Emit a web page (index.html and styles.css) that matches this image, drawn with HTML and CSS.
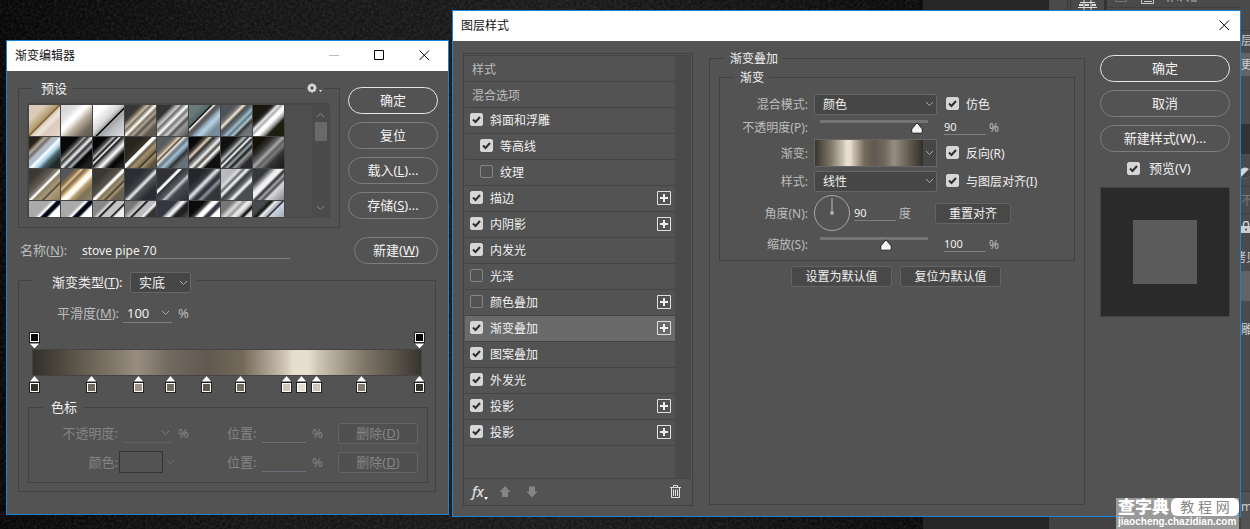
FILE: index.html
```html
<!DOCTYPE html>
<html lang="zh-CN">
<head>
<meta charset="utf-8">
<title>图层样式</title>
<link rel="stylesheet" href="styles.css">
</head>
<body>
<svg width="0" height="0" class="defs" aria-hidden="true">
  <symbol id="stop-up" viewBox="0 0 11 17"><path d="M5.500 0 11 6V17H0V6z" fill="#222"/><path d="M5.500 0 10.300 5.500H.7z" fill="#fff"/><path d="M1 7h9v9H1z" fill="#fff"/><path d="M2 8h7v7H2z" fill="currentColor"/></symbol>
  <symbol id="stop-down" viewBox="0 0 11 17"><path d="M0 0h11v11L5.500 17 0 11z" fill="#222"/><path d="M1 1h9v9H1z" fill="#fff"/><path d="M2 2h7v7H2z" fill="currentColor"/><path d="M.7 11.500h9.600L5.500 16.500z" fill="#fff"/></symbol>
  <symbol id="plus" viewBox="0 0 14 14"><path d="M.5 .5h13v13H.5z" fill="none" stroke="#e0e0e0"/><path d="M7 3v8M3 7h8" stroke="#f0f0f0" stroke-width="2"/></symbol>
  <symbol id="close" viewBox="0 0 11 11"><path d="M.5 .5l9.500 9.500M10 .5l-9.500 9.500" stroke="#000" stroke-width="1"/></symbol>
</svg>

<div class="backdrop" aria-hidden="true">
  <svg class="grain"><filter id="g"><feTurbulence type="fractalNoise" baseFrequency=".35" numOctaves="3"/><feColorMatrix values="0 0 0 0 1  0 0 0 0 1  0 0 0 0 1  .5 0 0 0 -.15"/></filter><rect width="100%" height="100%" filter="url(#g)"/></svg>
  <div class="strip"></div>
  <div class="panels">
    <svg class="panel-icons" viewBox="0 0 201 10"><path d="M18.500 0v10M21.500 0v10" stroke="#3a3a3a"/><path d="M56.500 0v10" stroke="#333" stroke-width="3"/><path d="M29 7.500h19M31 2.500h15" stroke="#ddd" stroke-width="1"/><path d="M30 4h4v2h-4zM36 4h4v2h-4zM43 4h4v2h-4z" fill="#ddd"/><path d="M35 0v10M42 0v10" stroke="#ddd"/><path d="M92.500 0v3.500h12V0M95 1.500h8" fill="none" stroke="#ccc"/><path d="M66.500 0v1.500h11V0" fill="none" stroke="#777"/><path d="M119 0v2M123 0v2M128 0h4v2M137 0h2v2M142 1h6" stroke="#bbb"/><path d="M58 7.500h143" stroke="#3f3f3f"/></svg>
    <div class="edge">
      <span class="e1">层</span><span class="e2">更</span>
      <svg class="e3" viewBox="0 0 12 12"><circle cx="6" cy="6" r="5.500" fill="#d5d5d5"/><path d="M2 10A5.500 5.500 0 0 0 10 2z" fill="#444"/></svg>
      <span class="e4">不</span>
      <svg class="e5" viewBox="0 0 10 12"><path d="M2.500 5V3a2.500 2.500 0 0 1 5 0v2" fill="none" stroke="#ccc" stroke-width="1.500"/><path d="M0 5h10v7H0z" fill="#ccc"/><circle cx="5" cy="8.500" r="1" fill="#444"/></svg>
      <span class="e6">拷贝</span><span class="e7">雕</span><span class="e8">m</span>
    </div>
  </div>
</div>

<main class="desktop">
  <section class="window editor" aria-label="渐变编辑器">
    <header class="titlebar"><h1>渐变编辑器</h1>
      <div class="win-buttons">
        <button aria-label="最小化"><svg width="11" height="11"><path d="M0 5.500h10" stroke="#bbb"/></svg></button>
        <button aria-label="最大化"><svg width="11" height="11"><path d="M.5 .5h9v9h-9z" fill="none" stroke="#000"/></svg></button>
        <button aria-label="关闭"><svg width="11" height="11"><use href="#close"/></svg></button>
      </div>
    </header>
    <div class="editor-body">
      <div class="editor-top">
        <fieldset class="presets">
          <legend>预设</legend>
          <button class="gear" aria-label="预设选项"><svg width="16" height="12" viewBox="0 0 16 12"><g stroke="#dedede" stroke-width="2.400"><path d="M5 .5v9M.5 5h9M1.800 1.800l6.400 6.400M8.200 1.800l-6.400 6.400"/></g><circle cx="5" cy="5" r="3.300" fill="#dedede"/><circle cx="5" cy="5" r="1.700" fill="#535353"/><path d="M12 7h3l-1.500 2z" fill="#eee"/></svg></button>
          <div class="preset-box">
            <div class="swatches">
              <i></i><i></i><i></i><i></i><i></i><i></i><i></i><i></i>
              <i></i><i></i><i></i><i></i><i></i><i></i><i></i><i></i>
              <i></i><i></i><i></i><i></i><i></i><i></i><i></i><i></i>
              <i></i><i></i><i></i><i></i><i></i><i></i><i></i><i></i>
            </div>
            <div class="scroller"><svg width="9" height="6"><path d="M1 5l3.500-3.500L8 5" fill="none" stroke="#8a8a8a"/></svg><span class="thumb"></span><svg width="9" height="6"><path d="M1 1l3.500 3.500L8 1" fill="none" stroke="#8a8a8a"/></svg></div>
          </div>
        </fieldset>
        <div class="actions">
          <button class="pill primary">确定</button>
          <button class="pill">复位</button>
          <button class="pill">载入(<u>L</u>)...</button>
          <button class="pill">存储(<u>S</u>)...</button>
        </div>
      </div>
      <div class="name-row">
        <label class="dim" for="name">名称(<u>N</u>):</label>
        <input class="line" id="name" type="text" value="stove pipe 70">
        <button class="pill">新建(<u>W</u>)</button>
      </div>
      <fieldset class="gradient-set">
        <legend><label for="kind">渐变类型(<u>T</u>):</label><select id="kind" class="drop"><option>实底</option></select></legend>
        <div class="smooth"><label class="dim" for="smooth">平滑度(<u>M</u>):</label><input class="line combo" id="smooth" type="text" value="100"><span class="dim">%</span></div>
        <div class="stops top">
          <svg class="stop k" style="left:0%"><use href="#stop-down"/></svg><svg class="stop k" style="left:100%"><use href="#stop-down"/></svg>
        </div>
        <div class="ramp"></div>
        <div class="stops">
          <svg class="stop c1" style="left:0%"><use href="#stop-up"/></svg>
          <svg class="stop c2" style="left:14.8%"><use href="#stop-up"/></svg>
          <svg class="stop c3" style="left:27%"><use href="#stop-up"/></svg>
          <svg class="stop c2" style="left:35.3%"><use href="#stop-up"/></svg>
          <svg class="stop c4" style="left:44.7%"><use href="#stop-up"/></svg>
          <svg class="stop c2" style="left:53.5%"><use href="#stop-up"/></svg>
          <svg class="stop c5" style="left:65.5%"><use href="#stop-up"/></svg>
          <svg class="stop c6" style="left:69.4%"><use href="#stop-up"/></svg>
          <svg class="stop c5" style="left:73.3%"><use href="#stop-up"/></svg>
          <svg class="stop c7" style="left:84.9%"><use href="#stop-up"/></svg>
          <svg class="stop c1" style="left:100%"><use href="#stop-up"/></svg>
        </div>
        <fieldset class="stop-set">
          <legend>色标</legend>
          <div class="stop-grid">
            <label class="end" for="so">不透明度:</label><input class="line combo" id="so" type="text" disabled><span>%</span>
            <label for="p1">位置:</label><input class="line" id="p1" type="text" disabled><span class="pct">%</span>
            <button class="box" disabled>删除(<u>D</u>)</button>
            <span class="end">颜色:</span><span class="color-cell"><button class="color" aria-label="颜色" disabled></button><svg width="9" height="6"><path d="M1 1l3.500 3.500L8 1" fill="none" stroke="#6c6c6c"/></svg></span><span></span>
            <label for="p2">位置:</label><input class="line" id="p2" type="text" disabled><span class="pct">%</span>
            <button class="box" disabled>删除(<u>D</u>)</button>
          </div>
        </fieldset>
      </fieldset>
    </div>
  </section>

  <section class="window style" aria-label="图层样式">
    <header class="titlebar"><h1>图层样式</h1>
      <div class="win-buttons"><button aria-label="关闭"><svg width="11" height="11"><use href="#close"/></svg></button></div>
    </header>
    <div class="style-body">
      <nav class="effects">
        <ul>
          <li class="head">样式</li>
          <li class="head">混合选项</li>
          <li><label><input type="checkbox" checked>斜面和浮雕</label></li>
          <li class="sub"><label><input type="checkbox" checked>等高线</label></li>
          <li class="sub"><label><input type="checkbox">纹理</label></li>
          <li><label><input type="checkbox" checked>描边</label><button aria-label="添加"><svg width="14" height="14"><use href="#plus"/></svg></button></li>
          <li><label><input type="checkbox" checked>内阴影</label><button aria-label="添加"><svg width="14" height="14"><use href="#plus"/></svg></button></li>
          <li><label><input type="checkbox" checked>内发光</label></li>
          <li><label><input type="checkbox">光泽</label></li>
          <li><label><input type="checkbox">颜色叠加</label><button aria-label="添加"><svg width="14" height="14"><use href="#plus"/></svg></button></li>
          <li class="on"><label><input type="checkbox" checked>渐变叠加</label><button aria-label="添加"><svg width="14" height="14"><use href="#plus"/></svg></button></li>
          <li><label><input type="checkbox" checked>图案叠加</label></li>
          <li><label><input type="checkbox" checked>外发光</label></li>
          <li><label><input type="checkbox" checked>投影</label><button aria-label="添加"><svg width="14" height="14"><use href="#plus"/></svg></button></li>
          <li><label><input type="checkbox" checked>投影</label><button aria-label="添加"><svg width="14" height="14"><use href="#plus"/></svg></button></li>
        </ul>
        <div class="tools">
          <button class="fx"><em>fx</em><svg width="4" height="3"><path d="M0 0h4L2 3z" fill="#fff"/></svg></button>
          <button aria-label="上移"><svg width="12" height="12"><path d="M6 0l5.500 6H9v5H3V6H.5z" fill="#858585"/></svg></button>
          <button aria-label="下移"><svg width="12" height="12"><path d="M6 11.500L.5 5.500H3V.5h6v5h2.500z" fill="#858585"/></svg></button>
          <button class="bin" aria-label="删除"><svg width="11" height="13" fill="none" stroke="#e0e0e0"><path d="M0 2.500h11M3.500 2V.5h4V2M1.500 3v9.500h8V3M3.500 4.500v6.500M5.500 4.500v6.500M7.500 4.500v6.500"/></svg></button>
        </div>
      </nav>

      <fieldset class="overlay">
        <legend>渐变叠加</legend>
        <fieldset class="options">
          <legend>渐变</legend>
          <div class="row"><label class="cap" for="mode">混合模式:</label><select id="mode" class="drop wide"><option>颜色</option></select><label class="tick"><input type="checkbox" checked>仿色</label></div>
          <div class="row r24"><label class="cap" for="op">不透明度(P):</label><input id="op" type="range" value="90"><input class="line val" type="text" value="90" aria-label="不透明度"><span class="dim">%</span></div>
          <div class="row r28"><span class="cap">渐变:</span><button class="ramp-drop" aria-label="渐变"><span class="ramp-face"></span></button><label class="tick"><input type="checkbox" checked>反向(R)</label></div>
          <div class="row mt"><label class="cap" for="sty">样式:</label><select id="sty" class="drop wide"><option>线性</option></select><label class="tick"><input type="checkbox" checked>与图层对齐(I)</label></div>
          <div class="row mt"><label class="cap" for="ang">角度(N):</label><svg class="dial" width="36" height="36" viewBox="0 0 36 36"><circle cx="18" cy="18" r="17.500" fill="none" stroke="#a8a8a8"/><path d="M18 3v15" stroke="#999" stroke-width="1.500"/><circle cx="18" cy="18" r="2" fill="#aaa"/></svg><input class="line val" id="ang" type="text" value="90"><span class="dim">度</span><button class="box reset">重置对齐</button></div>
          <div class="row r26"><label class="cap" for="sc">缩放(S):</label><input id="sc" type="range" value="61"><input class="line val" type="text" value="100" aria-label="缩放"><span class="dim">%</span></div>
        </fieldset>
        <div class="defaults"><button class="box">设置为默认值</button><button class="box">复位为默认值</button></div>
      </fieldset>

      <aside class="side">
        <button class="pill primary">确定</button>
        <button class="pill">取消</button>
        <button class="pill">新建样式(W)...</button>
        <label class="tick"><input type="checkbox" checked>预览(V)</label>
        <div class="preview"><div></div></div>
      </aside>
    </div>
  </section>
</main>

<div class="mark"><div class="mark-top"><b>查字典</b><span>教 程 网</span></div><div class="mark-url">jiaocheng.chazidian.com</div></div>
</body>
</html>
```

FILE: styles.css
```css
* { box-sizing: border-box; }
body {
  margin: 0; min-height: 100vh; position: relative; overflow: hidden;
  background: #0c0c0c; color: #f0f0f0;
  font: 13px/17px "Noto Sans", "Noto Sans CJK SC", sans-serif;
}
button, input, select { font: inherit; color: inherit; margin: 0; padding: 0; border: 0; background: none; }
fieldset { margin: 0; padding: 0; min-width: 0; border: 1px solid #424242; }
legend { padding: 0; }
svg { display: block; flex: none; }
u { text-underline-offset: 1px; }
.defs { position: absolute; }
.dim { color: #bdbdbd; }

/* desktop behind the dialogs */
.backdrop { position: absolute; inset: 0; overflow: hidden; background: linear-gradient(90deg, #060606, #141414 20%, #1a1a1a 45%, #0a0a0a 72%); }
.grain { position: absolute; inset: 0; width: 100%; height: 100%; opacity: .3; }
.strip { position: absolute; top: 0; bottom: 0; right: 201px; width: 126px; background: #262626; }
.panels { position: absolute; top: 0; bottom: 0; right: 0; width: 201px; background: linear-gradient(#4a4a4a 90%, #424242); }
.panel-icons { width: 201px; height: 10px; }
.edge { position: absolute; top: 0; right: 0; bottom: 0; width: 9px; overflow: hidden; font-size: 12px; color: #ccc;
  background: linear-gradient(#4b4b4b 30px, #3f3f3f 30px 31px, #4b4b4b 31px 53px, #646464 53px 76px, #4b4b4b 76px 124px, #333 124px 154px, #4b4b4b 154px 186px, #404040 186px 187px, #4b4b4b 187px 213px, #404040 213px 214px, #4b4b4b 214px 271px, #646464 271px 301px, #4b4b4b 301px 491px, #3c3c3c 491px 492px, #535353 492px); }
.edge > * { position: absolute; left: 0; white-space: nowrap; }
.e1 { top: 32px; } .e2 { top: 56px; }
.edge .e3 { top: 167px; left: -2px; width: 12px; height: 12px; }
.e4 { top: 192px; color: #777; }
.edge .e5 { top: 221px; width: 10px; height: 12px; }
.edge .e6 { top: 249px; left: -7px; } .edge .e7 { top: 321px; left: 0; } .e8 { top: 498px; }

/* windows */
.desktop { position: relative; display: grid; grid-template-columns: 443fr 789fr; gap: 3px; align-items: start; padding: 10px 9px 12px 6px; }
.window { border: 1px solid #1883d7; background: #535353; min-width: 0; }
.editor { margin-top: 30px; }
.titlebar { height: 30px; padding: 0 18px 2px 8px; display: flex; align-items: center; justify-content: space-between; background: #fff; color: #111; }
.titlebar h1 { margin: 0; font-size: 12px; font-weight: 400; }
.win-buttons { display: flex; gap: 34px; }
.style .titlebar { padding-right: 10px; }

.pill { height: 27px; border: 1px solid #7d7d7d; border-radius: 14px; color: #f2f2f2; white-space: nowrap; }
.pill.primary { border: 1px solid #e6e6e6; }
.box { height: 21px; border: 1px solid #636363; border-radius: 3px; background: #484848; white-space: nowrap; }
.line { height: 17px; min-width: 0; border-bottom: 1px solid #7f7f7f; }
.drop { appearance: none; height: 21px; border: 1px solid #666; border-radius: 2px; background: #464646 url("data:image/svg+xml,%3Csvg xmlns='http://www.w3.org/2000/svg' width='9' height='6'%3E%3Cpath d='M1 1l3.5 3.5L8 1' fill='none' stroke='%23aaa'/%3E%3C/svg%3E") no-repeat right 2px center; }
.combo { background: url("data:image/svg+xml,%3Csvg xmlns='http://www.w3.org/2000/svg' width='9' height='6'%3E%3Cpath d='M1 1l3.5 3.5L8 1' fill='none' stroke='%23aaa'/%3E%3C/svg%3E") no-repeat right 2px center; }

input[type=checkbox] { appearance: none; flex: none; width: 13px; height: 13px; border: 1px solid #858585; border-radius: 2px; }
input[type=checkbox]:checked { border-color: #d6d6d6; background: #d6d6d6 url("data:image/svg+xml,%3Csvg xmlns='http://www.w3.org/2000/svg' width='11' height='11'%3E%3Cpath d='M2 5.500L4.500 8L9 3' fill='none' stroke='%232e2e2e' stroke-width='2'/%3E%3C/svg%3E") center no-repeat; }

/* gradient editor */
.editor-body { padding: 9px 10px 22px 11px; }
.editor-top { display: grid; grid-template-columns: 1fr 90px; gap: 8px; }
.presets { position: relative; padding: 6px 9px 9px 8px; }
.presets legend { margin-left: 6px; padding: 0 6px 0 8px; }
.gear { position: absolute; top: -14px; right: 15px; width: 19px; padding-left: 2px; background: #535353; }
.preset-box { display: flex; justify-content: space-between; height: 115px; border: solid #484848; border-width: 2px 1px 1px 2px; background: #4f4f4f; }
.swatches { height: 112px; overflow: hidden; display: grid; grid-template-columns: repeat(8, 31px); grid-auto-rows: 31px; gap: 1px; outline: 1px solid #454545; background: #454545; }
.scroller { width: 17px; padding: 7px 0 6px; display: flex; flex-direction: column; align-items: center; background: #4b4b4b; }
.scroller .thumb { width: 12px; height: 19px; margin: 4px 0 auto; background: #696969; }
.actions { padding-top: 7px; display: flex; flex-direction: column; gap: 8px; }

.swatches i:nth-child(1) { background: linear-gradient(135deg, #dccbba 25%, #c2ae88 38%, #b39a6a 46%, #76603a 50%, #dfcdb8 53%, #f0e5da 62%, #dccabd 72%, #e6d8c8); }
.swatches i:nth-child(2) { background: linear-gradient(135deg, #d8d8d8 15%, #e4e4e4 28%, #fff 38% 44%, #b9ac9b 60%, #756c60 80%, #5b554c); }
.swatches i:nth-child(3) { background: linear-gradient(135deg, #fff 20%, #d8d8d8 44%, #a8a8a8 53%, #000 54% 56%, #a0a0a0 58%, #b8bcc0 70%, #dadde0); }
.swatches i:nth-child(4) { background: linear-gradient(135deg, #373737 25%, #6a6251 30%, #c5baa7 37%, #756d5f 42%, #fffef7 50%, #796f61 56%, #b0a695 61%, #534e48 67%, #a09482 73%, #5f5750 82%); }
.swatches i:nth-child(5) { background: linear-gradient(135deg, #343434 24%, #888 30%, #ccc 36%, #686868 41%, #fff 50%, #777 56%, #d2d2d2 64%, #505050 70%, #979797 77%, #4c4c4c); }
.swatches i:nth-child(6) { background: linear-gradient(135deg, #6c7979 20%, #526464 34%, #020b06 37%, #f5f5ed 40%, #5a5355 45%, #606068 51%, #93a9b9 58%, #b9d3e4 65%, #778b99 80%); }
.swatches i:nth-child(7) { background: linear-gradient(135deg, #4d5358 22%, #777577 31%, #f5e7d3 37%, #4c4b4d 43%, #617480 51%, #a4bac4 57%, #5d7786 63%, #b0cad3 68%, #343332 74%, #6d7478 82%); }
.swatches i:nth-child(8) { background: linear-gradient(135deg, #19170e 28%, #343434 34%, #eee 41%, #aaa 46%, #fff 52% 57%, #999 66%, #1c1f10 73%); }
.swatches i:nth-child(9) { background: linear-gradient(135deg, #282219 18%, #b9ab97 27%, #6c6b6b 33%, #bbb 40%, #a9c1d8 48%, #fff 52%, #aed6e9 62%, #486069 71%, #222a2b 84%); }
.swatches i:nth-child(10) { background: linear-gradient(135deg, #080808 27%, #505050 35%, #aaa 39%, #333 43%, #f6f6f6 51%, #2a2c30 57%, #aeb2b8 64%, #020202 70%, #222 88%); }
.swatches i:nth-child(11) { background: linear-gradient(135deg, #070707 22%, #575757 30%, #bbb 34%, #111 39%, #fff 43%, #16161a 47%, #999 54%, #fff 61%, #222 72%, #030303 78%, #333); }
.swatches i:nth-child(12) { background: linear-gradient(135deg, #28251e 28%, #3b3528 42%, #fff 45% 50%, #695d46 54%, #a19271 62%, #7a6b50 70%, #30291f 73%, #a08d69 76%, #5a5040 88%); }
.swatches i:nth-child(13) { background: linear-gradient(135deg, #575c61 24%, #8b8274 32%, #ead6b7 36%, #4d4a4a 41%, #f4eada 44%, #607581 51%, #a8bfd0 59%, #647d8d 65%, #2e302f 70%, #687078 80%); }
.swatches i:nth-child(14) { background: linear-gradient(135deg, #0a0a0a 20%, #4f483f 28%, #ded2be 34%, #292723 40%, #92949a 48%, #f3f3f3 53%, #4d473f 60%, #fff 66%, #101010 75%); }
.swatches i:nth-child(15) { background: linear-gradient(135deg, #111 25%, #444 32%, #bcc3c5 39%, #2b3032 44%, #fff 48%, #27292b 53%, #9ca8ad 59%, #16181a 65%, #999 71%, #282a2d 82%); }
.swatches i:nth-child(16) { background: linear-gradient(135deg, #151208 20%, #2f2e2c 32%, #666 43%, #aaa 49%, #5d5d5d 56%, #7b7b7b 61%, #333 72%, #181818); }
.swatches i:nth-child(17) { background: linear-gradient(135deg, #3b3732 20%, #625c54 40%, #8d877e 48%, #fff 51% 53%, #897d67 57%, #a79976 68%, #4e4537 73%, #ae9f7c 76%, #8b7956); }
.swatches i:nth-child(18) { background: linear-gradient(135deg, #54565c 20%, #92784f 29%, #dfc38b 34%, #7d654c 39%, #c3a577 45%, #fff3d7 50%, #fff 58%, #b69c6b 66%, #7f7157 77%, #8c826d); }
.swatches i:nth-child(19) { background: linear-gradient(135deg, #3a3833 25%, #5b554a 45%, #fff 50% 53%, #807459 57%, #9d8e6f 65%, #3e3526 70%, #ab9a73 73%, #675f50 80%); }
.swatches i:nth-child(20) { background: linear-gradient(135deg, #2b2f34 30%, #3c4146 46%, #eee 54%, #50545a 60%, #292e32 78%); }
.swatches i:nth-child(21) { background: linear-gradient(135deg, #303236 32%, #fff 36% 39%, #303338 42%, #56595e 56%, #c6c9ce 61%, #474b50 69%, #292c30); }
.swatches i:nth-child(22) { background: linear-gradient(135deg, #242629 25%, #383b41 39%, #e9eaf0 47%, #3b3e44 56%, #2f3238 62%, #8e929a 68%, #333539 76%); }
.swatches i:nth-child(23) { background: linear-gradient(135deg, #b9babd 23%, #ddd 31%, #656b6d 37%, #fff 43%, #373d40 50%, #62696c 59%, #fff 67%, #484d51 73%); }
.swatches i:nth-child(24) { background: linear-gradient(135deg, #35373b 24%, #7d8085 31%, #ededed 39%, #f2f2f2 47%, #2b2d31 53%, #a5a6a9 60%, #46484c 65%, #d8d8da 71%, #828488); }
.swatches i:nth-child(25), .swatches i:nth-child(26) { background: linear-gradient(135deg, #aaa 34%, #fff 42%, #020816 46% 53%, #fff 58%, #fff 66%); }
.swatches i:nth-child(27) { background: linear-gradient(135deg, #888 25%, #ddd 32%, #000 36%, #c5c5c8 40% 52%, #111 55%, #eee 60%); }
.swatches i:nth-child(28) { background: linear-gradient(135deg, #777 20%, #ccc 32%, #000 36%, #bdbdc1 40% 50%, #fff 54%, #333 60%); }
.swatches i:nth-child(29) { background: linear-gradient(135deg, #343642 32%, #b8bbc2 38%, #fff 44%, #202022 52% 61%, #aaa); }
.swatches i:nth-child(30) { background: linear-gradient(135deg, #0b0b0b 26%, #444 33%, #fff 39% 46%, #363744 51% 57%, #fff 62%); }
.swatches i:nth-child(31) { background: linear-gradient(135deg, #777 20%, #ddd 31%, #999 38%, #f1f1f1 45%, #ccc 52%, #000 60%, #ddd 66%); }
.swatches i:nth-child(32) { background: linear-gradient(135deg, #444a4e 22%, #11130f 31%, #eee 37%, #a7b0bc 46%, #111 49%, #cbd4df 52%, #78818b); }

.name-row { margin-top: 9px; display: flex; align-items: center; }
.name-row label { width: 62px; padding-left: 2px; }
.name-row input { flex: 1; padding-left: 2px; margin-right: 64px; font-size: 12px; }
.name-row .pill { width: 84px; }

.gradient-set { margin: 8px 2px 0 0; padding: 15px 0 8px; }
.gradient-set > legend { height: 16px; margin-left: 13px; padding: 0 6px 0 20px; display: flex; align-items: flex-start; gap: 5px; }
.gradient-set > legend label { width: 73px; line-height: 20px; white-space: nowrap; }
.gradient-set > legend select { width: 61px; padding-left: 8px; }
.smooth { display: flex; align-items: center; height: 20px; padding-left: 38px; gap: 6px; }
.smooth label { width: 60px; white-space: nowrap; }
.smooth input { width: 49px; height: 20px; padding-left: 4px; }
.stops { position: relative; height: 16px; margin: 0 16px 0 15px; }
.stops.top { margin-top: 9px; height: 17px; }
.stop { position: absolute; top: 0; width: 11px; height: 17px; margin-left: -5px; }
.k { color: #050505; } .c1 { color: #35322d; } .c2 { color: #716a5e; } .c3 { color: #9c9184; } .c4 { color: #5f594c; }
.c5 { color: #cfc5b6; } .c6 { color: #e6dfd0; } .c7 { color: #83796d; }
.ramp { height: 27px; margin: 0 13px; border: 1px solid #444; background: linear-gradient(90deg, #332f2a, #6a6356 15%, #988d80 27%, #716a5f 35%, #615850 45%, #736959 54%, #cfc4b5 65%, #e6dfd0 67% 71%, #cec5b5 73.500%, #82786a 85%, #38352f); }
.stop-set { margin: 7px 7px 0 9px; padding: 6px 9px 9px 0; color: #858585; }
.stop-set legend { margin-left: 14px; padding: 0 6px 0 8px; color: #f0f0f0; }
.stop-grid { display: grid; grid-template-columns: 89px 60px 1fr 35px 44px 32px 80px; grid-auto-rows: 22px; row-gap: 7px; align-items: center; }
.stop-grid .end { text-align: right; }
.stop-grid .line { border-color: #69707a; height: 20px; }
.stop-grid .combo { margin: 0 6px 0 5px; opacity: .5; }
.stop-grid .pct { padding-left: 6px; }
.color-cell { display: flex; align-items: center; gap: 3px; padding-left: 1px; }
.color { width: 44px; height: 22px; border: 1px solid #333; }
.stop-grid .box { background: #505050; }

/* layer style */
.style-body { display: grid; grid-template-columns: 230px 1fr 130px; padding: 9px 10px 10px; font-size: 12px; }
.effects { margin: 3px 0 0; border: 1px solid #424242; padding: 1px; }
.effects ul { margin: 0; padding: 0 0 32px; list-style: none; border-top: 1px solid #444; border-right: 16px solid #4a4a4a; border-bottom: 1px solid #444; }
.effects li { height: 26px; padding: 0 4px 1px 5px; border-bottom: 1px solid #454545; display: flex; align-items: center; justify-content: space-between; }
.effects li.head { padding: 1px 0 0 7px; color: #bdbdbd; }
.effects li.sub { padding-left: 15px; }
.effects li.on { background: #6a6a6a; }
.effects label { display: flex; align-items: center; gap: 7px; }
.effects label input { margin-bottom: 2px; }
.tools { height: 25px; padding: 0 10px 0 7px; display: flex; align-items: center; gap: 15px; }
.tools .fx { display: flex; align-items: flex-end; font-size: 14px; font-weight: 500; color: #e0e0e0; margin-right: -4px; }
.tools .bin { margin-left: auto; }

.overlay { margin: 0 15px 1px 16px; }
.overlay > legend { margin-left: 14px; padding: 0 5px 0 6px; }
.options { margin: 2px 9px 0; padding: 7px 0 3px; }
.options legend { margin-left: 14px; padding: 0 5px 0 6px; }
.row { min-height: 22px; display: flex; align-items: center; }
.r24 { height: 24px; } .r26 { height: 26px; } .r28 { height: 28px; } .mt { margin-top: 3px; }
.cap { width: 88px; margin-right: 6px; text-align: right; color: #bdbdbd; white-space: nowrap; }
.wide { width: 123px; padding-left: 8px; }
.tick { display: flex; align-items: center; gap: 7px; white-space: nowrap; }
.row .tick { margin-left: 9px; }
.row .tick input { margin-bottom: 2px; }
.val { width: 42px; height: 16px; margin: 0 3px 0 10px; font-size: 11px; }
.dial + .val { margin-left: 4px; }
.reset { width: 76px; margin-left: 24px; }
.ramp-drop { width: 123px; height: 28px; border: 1px solid #666; background: #464646 url("data:image/svg+xml,%3Csvg xmlns='http://www.w3.org/2000/svg' width='9' height='6'%3E%3Cpath d='M1 1l3.5 3.5L8 1' fill='none' stroke='%23aaa'/%3E%3C/svg%3E") no-repeat right 2px center; }
.ramp-face { display: block; width: 108px; height: 26px; background: linear-gradient(270deg, #332f2a, #6a6356 15%, #988d80 27%, #716a5f 35%, #615850 45%, #736959 54%, #cfc4b5 65%, #e6dfd0 67% 71%, #cec5b5 73.500%, #82786a 85%, #38352f); }
input[type=range] { appearance: none; width: 120px; height: 18px; }
input[type=range]::-webkit-slider-runnable-track { height: 14px; background: linear-gradient(#757575, #757575) 6px 0 / calc(100% - 12px) 3px no-repeat; }
input[type=range]::-webkit-slider-thumb { appearance: none; width: 12px; height: 12px; margin-top: 2px; background: url("data:image/svg+xml,%3Csvg xmlns='http://www.w3.org/2000/svg' width='12' height='12'%3E%3Cpath d='M6 .8L11.300 7V10a1.200 1.200 0 0 1-1.200 1.200H1.900A1.200 1.200 0 0 1 .7 10V7z' fill='%23f4f4f4' stroke='%23222'/%3E%3C/svg%3E"); }
.defaults { display: flex; justify-content: center; gap: 8px; margin: 5px 2px 0 0; }
.defaults .box { width: 101px; }

.side { padding-top: 5px; display: flex; flex-direction: column; gap: 8px; font-size: 13px; }
.side .tick { padding-left: 27px; gap: 9px; }
.preview { margin-top: 2px; height: 130px; border: 1px solid #444; background: #2a2a2a; display: grid; place-items: center; }
.preview div { width: 64px; height: 64px; background: #5b5b5b; }

/* site badge */
.mark { position: absolute; right: 11px; bottom: 0; width: 123px; height: 31px; background: #999; color: #fff; overflow: hidden; }
.mark-top { display: flex; height: 18px; padding-left: 2px; }
.mark-top b { font-size: 17px; line-height: 18px; font-weight: 900; width: 53px; }
.mark-top span { flex: 1; background: #fff; color: #888; border-radius: 6px; font-size: 14px; line-height: 18px; text-align: center; white-space: nowrap; }
.mark-url { padding-left: 2px; font: bold 10px/12px "Liberation Sans", sans-serif; white-space: nowrap; }
```
